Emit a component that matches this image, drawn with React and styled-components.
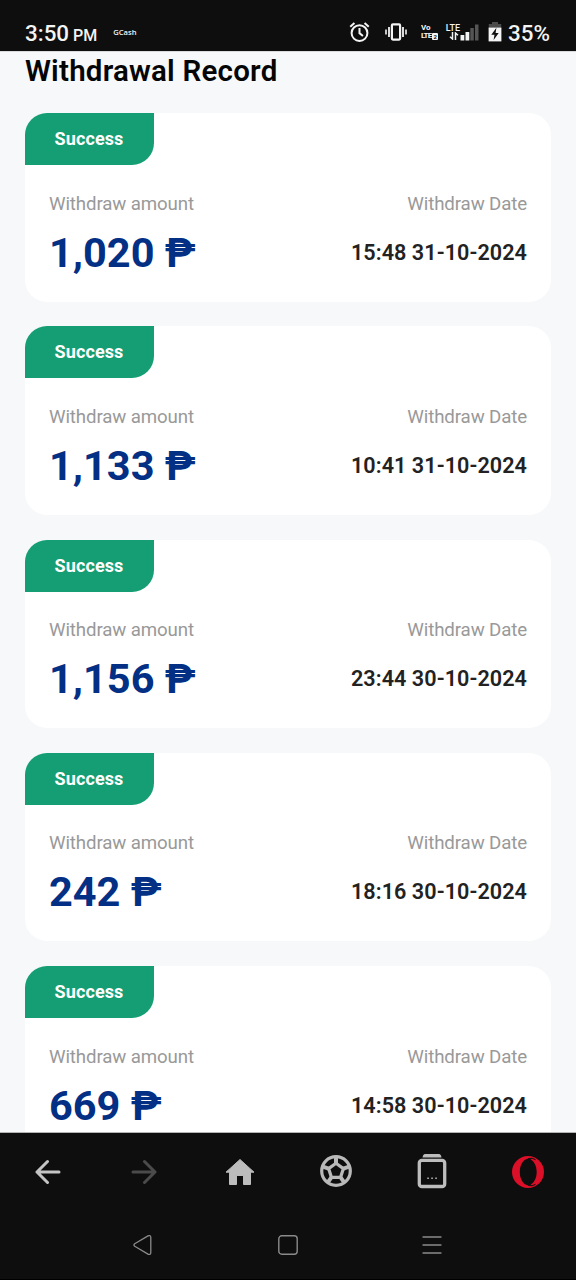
import React from "react";
import styled, { createGlobalStyle } from "styled-components";

const GlobalStyle = createGlobalStyle`
  * { box-sizing: border-box; }
  body { margin: 0; background: #0e0e0e; font-family: Roboto, "Liberation Sans", sans-serif; }
  svg { display: block; flex: none; }
`;

const Screen = styled.div`
  width: 576px;
  height: 1280px;
  display: flex;
  flex-direction: column;
  overflow: hidden;
  background: #0e0e0e;
`;

const StatusBar = styled.header`
  flex: none;
  height: 51px;
  padding: 14px 26px 0 25px;
  display: flex;
  align-items: flex-start;
  justify-content: space-between;
  color: #f4f4f4;
`;

const StatusGroup = styled.div`
  display: flex;
  height: 36px;
  align-items: center;
`;

const Clock = styled.span`
  font-size: 22.4px;
  line-height: 36px;
  font-weight: 500;
  padding-top: 4px;
  white-space: nowrap;
`;

const Meridiem = styled.span`
  font-size: 16px;
  margin-left: 4px;
`;

const Notification = styled.span`
  font-family: "Open Sans", sans-serif;
  font-size: 7.6px;
  line-height: 10px;
  font-weight: 600;
  margin: -1px 0 0 16px;
`;

const Battery = styled.span`
  font-size: 22.4px;
  line-height: 36px;
  font-weight: 500;
  margin-left: 6px;
  padding-top: 2px;
`;

const Page = styled.main`
  flex: none;
  height: 1082px;
  padding: 0 25px;
  overflow: hidden;
  background: #f6f8fa;
  border-top: 1px solid #d9dbdd;
  border-bottom: 1px solid #b4b4b4;
`;

const Title = styled.h1`
  margin: 0;
  height: 61.2px;
  font-size: 29.5px;
  letter-spacing: 0.22px;
  line-height: 39px;
  font-weight: 600;
  color: #050505;
  white-space: nowrap;
`;

const CardList = styled.div`
  display: flex;
  flex-direction: column;
  gap: 24.5px;
`;

const Card = styled.article`
  flex: none;
  height: 188.7px;
  border-radius: 22px;
  background: #fff;
`;

const Badge = styled.div`
  width: 129px;
  height: 52px;
  border-radius: 22px 0 22px 0;
  background: #159e73;
  color: #fff;
  font-size: 18px;
  letter-spacing: 0.1px;
  padding-right: 1px;
  font-weight: 700;
  line-height: 52px;
  text-align: center;
`;

const Details = styled.div`
  display: flex;
  justify-content: space-between;
  padding: 26.6px 24px 0 24px;
`;

const Field = styled.div`
  display: flex;
  flex-direction: column;
  align-items: ${(p) => (p.$end ? "flex-end" : "flex-start")};
`;

const Label = styled.span`
  font-size: 18.7px;
  letter-spacing: -0.13px;
  line-height: 24px;
  color: #999;
  white-space: nowrap;
`;

const Amount = styled.strong`
  margin-top: 12px;
  font-size: 41.5px;
  line-height: 50px;
  font-weight: 700;
  color: #032f84;
  white-space: nowrap;
`;

const DateText = styled.strong`
  margin-top: 12px;
  font-size: 21.6px;
  letter-spacing: 0.06px;
  line-height: 50px;
  font-weight: 600;
  color: #222;
  white-space: nowrap;
`;

const BrowserBar = styled.nav`
  flex: none;
  height: 78px;
  display: grid;
  grid-template-columns: repeat(6, 96px);
  justify-items: center;
  align-items: center;
  color: #b9b9b9;
`;

const SystemBar = styled.nav`
  flex: none;
  height: 69px;
  padding: 0 72px;
  display: grid;
  grid-template-columns: repeat(3, 144px);
  justify-items: center;
  align-items: center;
  color: #8a8a8a;
  border-bottom: 1px solid #000;
`;

const AlarmIcon = () => (
  <svg width="21" height="22" viewBox="0 0 22 23" fill="none" stroke="#f4f4f4" strokeWidth="2.1">
    <circle cx="11" cy="12.6" r="8.3" />
    <path d="M11 7.400v5.300l3.600 2.900M1.300 6l4.400-3.900M20.700 6l-4.400-3.900" />
  </svg>
);

const VibrateIcon = () => (
  <svg width="22" height="18" viewBox="0 0 22 18" fill="none" stroke="#f4f4f4" strokeWidth="2.200">
    <rect x="6.900" y="1.400" width="8.200" height="15.200" rx="1" />
    <path d="M4 4v10M18 4v10" strokeWidth="1.800" />
    <path d="M1 6.500v5M21 6.500v5" strokeWidth="1.600" />
  </svg>
);

const CarrierStack = styled.span`
  display: flex;
  flex-direction: column;
  width: 18px;
  margin-left: 14px;
  font-size: 8px;
  line-height: 8px;
  font-weight: 700;
`;

const SmallRow = styled.span`
  display: flex;
  align-items: center;
  height: 8px;
  overflow: hidden;
  letter-spacing: ${(p) => p.$tight || "0"};
`;

const SimChip = styled.span`
  width: 6px;
  height: 7px;
  flex: none;
  margin-left: 1px;
  border-radius: 1px;
  background: #f4f4f4;
  color: #0e0e0e;
  font-size: 6px;
  line-height: 7px;
  letter-spacing: 0;
  text-align: center;
`;

const Network = styled.span`
  display: flex;
  flex-direction: column;
  align-items: flex-end;
  width: 16px;
  margin-left: 5px;
  font-size: 9px;
  line-height: 8px;
  font-weight: 500;
`;

const DataArrows = () => (
  <svg width="11" height="8" viewBox="0 0 11 8" fill="none" stroke="#f4f4f4" strokeWidth="1.500">
    <path d="M3.500 0v7L1 4.800M6.500 8V1l2.500 2.200" />
  </svg>
);

const SignalIcon = () => (
  <svg width="19" height="17" viewBox="0 0 19 17">
    <path fill="#f4f4f4" d="M.5 11h3.800v5.500H.5zM5.500 8h3.800v8.500H5.500z" />
    <path fill="#555" d="M10.300 4h3.500v12.500h-3.500zM15 .5h3.500v16H15z" />
  </svg>
);

const BatteryIcon = () => (
  <svg width="14" height="20" viewBox="0 0 14 20">
    <path fill="#4b4b4b" d="M4 0h6v2h3.200v5H.8V2H4z" />
    <path fill="#f4f4f4" d="M.6 5.600h12.800V19.400H.6z" />
    <path fill="#0e0e0e" d="M8.400 5.800 3.300 12.800h3.200L5.600 18l5.100-7H7.600z" />
  </svg>
);

const ArrowIcon = ({ forward }) => (
  <svg width="26" height="26" viewBox="0 0 26 26" fill="none" stroke={forward ? "#4b4b4b" : "#c4c4c4"}
    strokeWidth="3" strokeLinecap="round" strokeLinejoin="round">
    <path d={forward ? "M2 13h22M13.500 2.500 24 13 13.500 23.500" : "M24 13H2M12.500 2.500 2 13l10.500 10.500"} />
  </svg>
);

const HomeIcon = () => (
  <svg width="30" height="28" viewBox="0 0 30 28">
    <path fill="#bdbdbd" stroke="#bdbdbd" strokeWidth="1" strokeLinejoin="round"
      d="M15 1.500 1 14.200h3.500V26.500h7V17.500h7v9h7V14.200H29z" />
  </svg>
);

const BallIcon = () => (
  <svg width="32" height="34" viewBox="0 0 32 34" fill="none" stroke="#b9b9b9" strokeWidth="3.200">
    <circle cx="16" cy="16" r="14.300" />
    <path strokeLinejoin="round" d="m16 8.300 7.400 5.300-2.800 8.700h-9.200l-2.800-8.700z" />
    <path strokeWidth="4" d="M16 8.300V2M23.400 13.600l5.700-1.900M20.600 22.300l3.600 5M11.400 22.300l-3.600 5M8.600 13.600l-5.700-1.900" />
  </svg>
);

const TabsIcon = () => (
  <svg width="30" height="38" viewBox="0 0 30 38" fill="none">
    <path fill="#bdbdbd" d="M8 1h14q2 0 2.500 3.500h-19Q6 1 8 1z" />
    <rect x="2.300" y="7.300" width="25.400" height="26.200" rx="2.600" stroke="#bdbdbd" strokeWidth="3.300" />
    <path fill="#bdbdbd" d="M10.300 24.500h1.500v1.500h-1.500zM14.300 24.500h1.500v1.500h-1.500zM18.300 24.500h1.500v1.500h-1.500z" />
  </svg>
);

const OperaIcon = () => (
  <svg width="34" height="34" viewBox="0 0 34 34">
    <path fill="#db0f27" fillRule="evenodd"
      d="M17 1a16 16 0 1 1 0 32 16 16 0 0 1 0-32zM18.500 3.500c-5.500 0-9.700 5.300-9.700 13.500s4.200 13.500 9.700 13.500c4.300-2.200 7.200-7.200 7.200-13.500S22.800 5.700 18.500 3.500z" />
    <path fill="none" stroke="#0e0e0e" strokeWidth="1" d="M17 3.700q4.500-1.400 7.500 1M17 30.300q4.500 1.400 7.500-1" />
  </svg>
);

const BackTriangle = () => (
  <svg width="22" height="20" viewBox="0 0 22 20" fill="none" stroke="currentColor" strokeWidth="1.300">
    <path strokeLinejoin="round" d="M1.700 8.800 15 .9q2.800-1.200 2.800 1.600v15q0 2.800-2.800 1.600L1.700 11.200q-1.500-1.200 0-2.400z" />
  </svg>
);

const HomeSquare = () => (
  <svg width="20" height="20" viewBox="0 0 20 20" fill="none" stroke="currentColor" strokeWidth="1.400">
    <rect x=".8" y=".8" width="18.400" height="18.400" rx="3" />
  </svg>
);

const MenuLines = () => (
  <svg width="20" height="18" viewBox="0 0 20 18" fill="none" stroke="currentColor" strokeWidth="1.300" strokeLinecap="round">
    <path d="M1 1h18M1 9h18M1 17h18" />
  </svg>
);

const records = [
  { amount: "1,020", date: "15:48 31-10-2024" },
  { amount: "1,133", date: "10:41 31-10-2024" },
  { amount: "1,156", date: "23:44 30-10-2024" },
  { amount: "242", date: "18:16 30-10-2024" },
  { amount: "669", date: "14:58 30-10-2024" },
];

const StatusIcons = styled.div`
  display: flex;
  align-items: center;
  gap: ${(p) => p.$gap || "0"};
`;

export default function App() {
  return (
    <Screen>
      <GlobalStyle />
      <StatusBar>
        <StatusGroup>
          <Clock>3:50<Meridiem>PM</Meridiem></Clock>
          <Notification>GCash</Notification>
        </StatusGroup>
        <StatusGroup>
          <StatusIcons $gap="15px">
            <AlarmIcon />
            <VibrateIcon />
          </StatusIcons>
          <CarrierStack>
            <SmallRow>Vo</SmallRow>
            <SmallRow $tight="-0.9px">LTE<SimChip>2</SimChip></SmallRow>
          </CarrierStack>
          <Network>LTE<DataArrows /></Network>
          <StatusIcons $gap="9px">
            <SignalIcon />
            <BatteryIcon />
          </StatusIcons>
          <Battery>35%</Battery>
        </StatusGroup>
      </StatusBar>
      <Page>
        <Title>Withdrawal Record</Title>
        <CardList>
          {records.map((r) => (
            <Card key={r.date}>
              <Badge>Success</Badge>
              <Details>
                <Field>
                  <Label>Withdraw amount</Label>
                  <Amount>{r.amount} ₱</Amount>
                </Field>
                <Field $end>
                  <Label>Withdraw Date</Label>
                  <DateText>{r.date}</DateText>
                </Field>
              </Details>
            </Card>
          ))}
        </CardList>
      </Page>
      <BrowserBar>
        <ArrowIcon />
        <ArrowIcon forward />
        <HomeIcon />
        <BallIcon />
        <TabsIcon />
        <OperaIcon />
      </BrowserBar>
      <SystemBar>
        <BackTriangle />
        <HomeSquare />
        <MenuLines />
      </SystemBar>
    </Screen>
  );
}
